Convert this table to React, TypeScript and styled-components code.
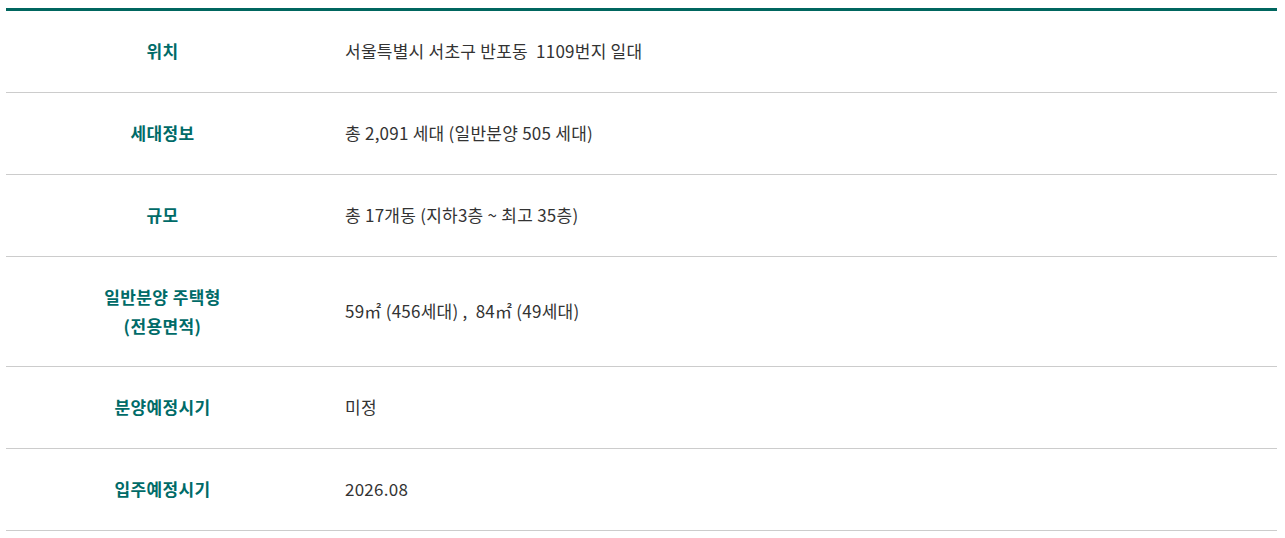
import styled, { createGlobalStyle } from "styled-components";

const GlobalStyle = createGlobalStyle`
  html, body {
    margin: 0;
    padding: 0;
    background: #ffffff;
  }
  body {
    font-family: "Noto Sans CJK KR", "Noto Sans", sans-serif;
  }
`;

const rows: { label: string[]; value: string }[] = [
  { label: ["위치"], value: "서울특별시 서초구 반포동\u00a0 1109번지 일대" },
  { label: ["세대정보"], value: "총 2,091 세대 (일반분양 505 세대)" },
  { label: ["규모"], value: "총 17개동 (지하3층 ~ 최고 35층)" },
  { label: ["일반분양 주택형", "(전용면적)"], value: "59㎡ (456세대) ,\u00a0 84㎡ (49세대)" },
  { label: ["분양예정시기"], value: "미정" },
  { label: ["입주예정시기"], value: "2026.08" },
];

function App() {
  return (
    <>
      <GlobalStyle />
      <Wrapper>
        <InfoTable>
          <tbody>
            {rows.map((row) => (
              <tr key={row.label.join("")}>
                <LabelCell>
                  {row.label.map((line, i) => (
                    <div key={i}>{line}</div>
                  ))}
                </LabelCell>
                <ValueCell>{row.value}</ValueCell>
              </tr>
            ))}
          </tbody>
        </InfoTable>
      </Wrapper>
    </>
  );
}

export default App;

const Wrapper = styled.div`
  padding: 8px 8px 0 6px;
`;

const InfoTable = styled.table`
  width: 100%;
  border-collapse: separate;
  border-spacing: 0;
  border-top: 3px solid #00665f;
  table-layout: fixed;
`;

const LabelCell = styled.th`
  width: 313px;
  padding: 26px 0;
  border-bottom: 1px solid #cccccc;
  font-size: 17px;
  line-height: 1.7;
  font-weight: 700;
  letter-spacing: 0.4px;
  color: #006b68;
  text-align: center;
  vertical-align: middle;
`;

const ValueCell = styled.td`
  padding: 26px 0 26px 26px;
  border-bottom: 1px solid #cccccc;
  font-size: 17px;
  line-height: 1.7;
  letter-spacing: 0.25px;
  color: #333333;
  vertical-align: middle;
`;
